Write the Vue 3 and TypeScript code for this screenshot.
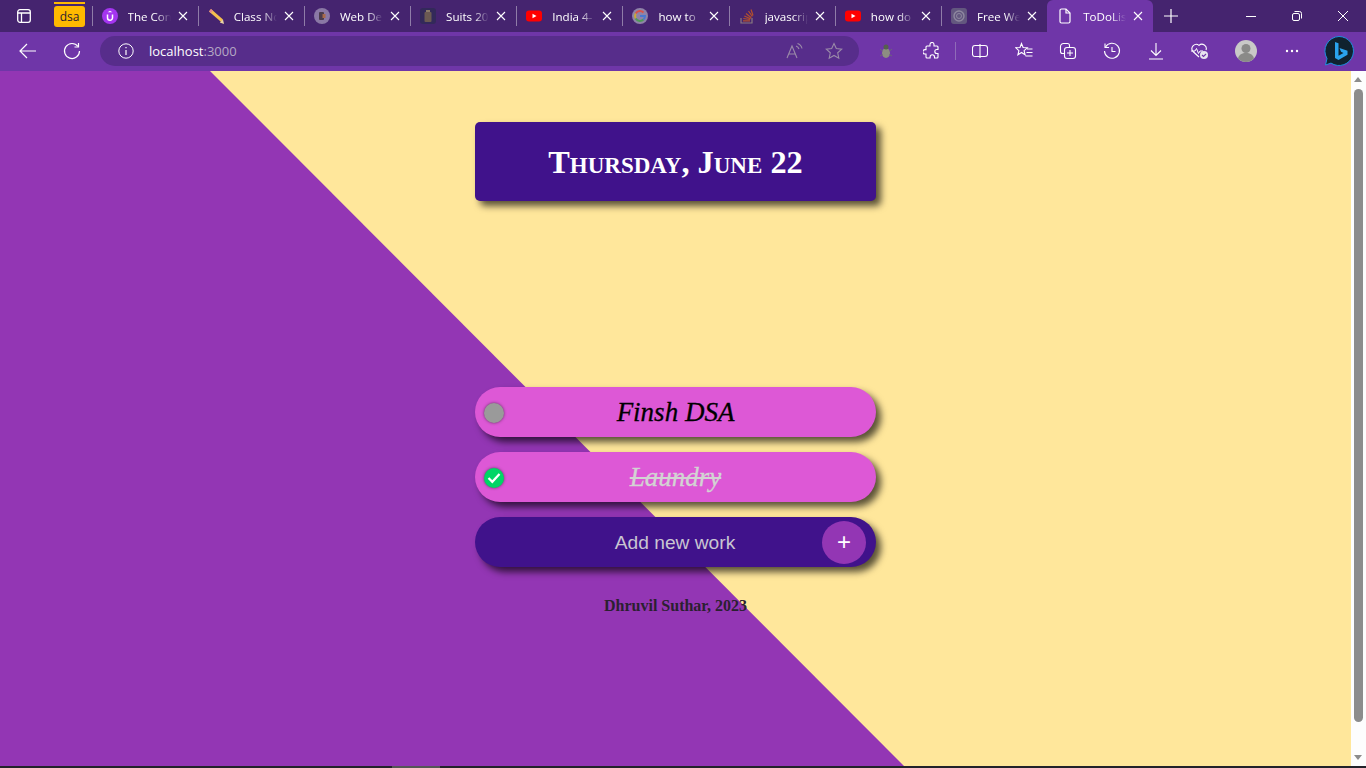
<script setup lang="ts">
interface Tab {
  title: string
  icon: string
}

const tabs: Tab[] = [
  { title: 'The Con', icon: 'udemy' },
  { title: 'Class No', icon: 'pencil' },
  { title: 'Web De', icon: 'web' },
  { title: 'Suits 20', icon: 'suits' },
  { title: 'India 4-', icon: 'youtube' },
  { title: 'how to', icon: 'google' },
  { title: 'javascrip', icon: 'stack' },
  { title: 'how do', icon: 'youtube' },
  { title: 'Free We', icon: 'gpt' },
]

const tasks = [
  { label: 'Finsh DSA', done: false },
  { label: 'Laundry', done: true },
]
</script>

<template>
  <div class="window">
    <header class="tabstrip">
      <div class="tab-menu">
        <svg width="16" height="16" viewBox="0 0 16 16" fill="none" stroke="#fff" stroke-width="1.3">
          <rect x="1.7" y="1.7" width="12.6" height="12.6" rx="2.2" />
          <path d="M1.7 5h12.6M5.5 5v9.3" />
        </svg>
      </div>
      <div class="group-chip">dsa</div>
      <div class="tabs">
        <div v-for="tab in tabs" :key="tab.title" class="tab">
          <span class="favicon">
            <svg v-if="tab.icon === 'udemy'" width="16" height="16" viewBox="0 0 16 16">
              <circle cx="8" cy="8" r="8" fill="#a435f0" />
              <path d="M5.5 6.5v3.2a2.5 2.5 0 0 0 5 0V6.5" fill="none" stroke="#fff" stroke-width="1.5" />
              <path d="M8 2.8l2.4 1.4H5.6z" fill="#fff" />
            </svg>
            <svg v-else-if="tab.icon === 'pencil'" width="16" height="16" viewBox="0 0 16 16">
              <path d="M3 1l12 10.500-1.800 2.500L1 3.500z" fill="#f4c04e" />
              <path d="M3 1L1 3.500l1.800 1.500 2.200-2.300z" fill="#e58a8a" />
              <path d="M15 11.500L16 16l-4.200-1.500z" fill="#e9d3a6" />
            </svg>
            <svg v-else-if="tab.icon === 'web'" width="16" height="16" viewBox="0 0 16 16">
              <circle cx="8" cy="8" r="8" fill="#8a78a5" />
              <rect x="5" y="4" width="5" height="8" rx="1" fill="#4b3c4c" />
              <rect x="8.500" y="6" width="3" height="4" fill="#a86a4a" />
            </svg>
            <svg v-else-if="tab.icon === 'suits'" width="16" height="16" viewBox="0 0 16 16">
              <rect width="16" height="16" rx="3" fill="#33295a" />
              <rect x="4.500" y="4" width="7" height="10" rx="1" fill="#6b5a52" />
              <rect x="6" y="2" width="4" height="2" fill="#8a7a6a" />
            </svg>
            <svg v-else-if="tab.icon === 'youtube'" width="16" height="16" viewBox="0 0 16 16">
              <rect y="2.500" width="16" height="11" rx="3" fill="#f00" />
              <path d="M6.500 5.700l4 2.300-4 2.300z" fill="#fff" />
            </svg>
            <svg v-else-if="tab.icon === 'google'" width="16" height="16" viewBox="0 0 16 16" fill="none" stroke-width="2">
              <circle cx="8" cy="8" r="8" fill="#8f83a8" />
              <path d="M11.500 4.500A5 5 0 0 0 3.700 5.500" stroke="#d9534a" />
              <path d="M3.700 5.500a5 5 0 0 0 0 5" stroke="#c9a83a" />
              <path d="M3.700 10.500A5 5 0 0 0 11.500 11.500" stroke="#4f9a58" />
              <path d="M8 8h5a5 5 0 0 1-1.500 3.500" stroke="#4a78d0" />
            </svg>
            <svg v-else-if="tab.icon === 'stack'" width="16" height="16" viewBox="0 0 16 16" fill="none">
              <path d="M2 10v5h11v-5" stroke="#8a7a80" stroke-width="1.200" />
              <path d="M4 12.800h7M4.300 10.500l6.800 1M5.300 8l6.300 2.800M7 5.500l5.300 4.200M9.500 3l3.800 5.500M12 1.500l2 6" stroke="#b5502c" stroke-width="1.200" />
            </svg>
            <svg v-else width="16" height="16" viewBox="0 0 16 16" fill="none">
              <rect width="16" height="16" rx="3" fill="#63577f" />
              <circle cx="8" cy="8" r="5" stroke="#8f88a0" stroke-width="1.400" />
              <circle cx="8" cy="8" r="2.500" stroke="#8f88a0" />
            </svg>
          </span>
          <span class="tab-title">{{ tab.title }}</span>
          <svg class="tab-close" width="10" height="10" viewBox="0 0 10 10" stroke="#fff" stroke-width="1.100">
            <path d="M1 1l8 8M9 1l-8 8" />
          </svg>
        </div>
        <div class="tab tab--active">
          <span class="favicon">
            <svg width="16" height="16" viewBox="0 0 16 16" fill="none" stroke="#fff" stroke-width="1.200">
              <path d="M3 2.500a1.500 1.500 0 0 1 1.500-1.500H9l4 4v8.500a1.500 1.500 0 0 1-1.500 1.500h-7A1.500 1.500 0 0 1 3 13.500z" />
              <path d="M9 1v4h4" />
            </svg>
          </span>
          <span class="tab-title">ToDoLis</span>
          <svg class="tab-close" width="10" height="10" viewBox="0 0 10 10" stroke="#fff" stroke-width="1.100">
            <path d="M1 1l8 8M9 1l-8 8" />
          </svg>
        </div>
        <div class="new-tab">
          <svg width="14" height="14" viewBox="0 0 14 14" stroke="#fff" stroke-width="1.200">
            <path d="M7 0v14M0 7h14" />
          </svg>
        </div>
      </div>
      <div class="window-controls">
        <div class="win-btn">
          <svg width="10" height="10" viewBox="0 0 10 10" stroke="#fff"><path d="M0 5.500h10" /></svg>
        </div>
        <div class="win-btn">
          <svg width="10" height="10" viewBox="0 0 10 10" fill="none" stroke="#fff">
            <rect x=".5" y="2.500" width="7" height="7" rx="1.500" />
            <path d="M2.500 .5h5a2 2 0 0 1 2 2v5" />
          </svg>
        </div>
        <div class="win-btn">
          <svg width="10" height="10" viewBox="0 0 10 10" stroke="#fff"><path d="M0 0l10 10M10 0L0 10" /></svg>
        </div>
      </div>
    </header>

    <nav class="toolbar">
      <div class="nav-btn">
        <svg width="18" height="16" viewBox="0 0 18 16" fill="none" stroke="#fff" stroke-width="1.200">
          <path d="M17 8H1M8 1L1 8l7 7" />
        </svg>
      </div>
      <div class="nav-btn">
        <svg width="18" height="18" viewBox="0 0 18 18" fill="none" stroke="#fff" stroke-width="1.200">
          <path d="M15 4.500A7.500 7.500 0 1 0 16.500 9" />
          <path d="M15.500 1v4h-4" />
        </svg>
      </div>
      <div class="address">
        <svg width="16" height="16" viewBox="0 0 16 16" fill="none" stroke="#fff">
          <circle cx="8" cy="8" r="7.200" />
          <path d="M8 7v5M8 4v1.300" stroke-width="1.200" />
        </svg>
        <span class="url">localhost<span class="url-port">:3000</span></span>
        <span class="address-end">
          <svg width="18" height="18" viewBox="0 0 18 18" fill="none" stroke="#9a8aa8" stroke-width="1.100">
            <path d="M1 16L6 4l5 12M2.800 12h6.400M10 4c1.500.5 2.500 1.500 3 3M11.500 1.500c2.500.8 4 2.500 4.500 5" />
          </svg>
          <svg width="18" height="18" viewBox="0 0 18 18" fill="none" stroke="#9a8aa8" stroke-width="1.100">
            <path d="M9 1.500l2.300 5 5.400.6-4 3.700 1.100 5.400L9 13.500l-4.800 2.700 1.100-5.400-4-3.700 5.400-.6z" />
          </svg>
        </span>
      </div>
      <div class="tool-group">
        <div class="tool tool--bug">
          <svg width="14" height="16" viewBox="0 0 14 16">
            <ellipse cx="7" cy="10" rx="4" ry="5" fill="#8d8d82" />
            <circle cx="7" cy="4" r="2.500" fill="#55604c" />
            <path d="M1 6l2.500 2M13 6l-2.500 2M1 13l2.500-1.500M13 13l-2.500-1.500" stroke="#6d6579" />
          </svg>
        </div>
        <div class="tool">
          <svg width="18" height="18" viewBox="0 0 18 18" fill="none" stroke="#fff" stroke-width="1.100">
            <path d="M7 2.500a2 2 0 0 1 4 0V4h3a1 1 0 0 1 1 1v2.500h-1.200a2 2 0 0 0 0 4H15V15a1 1 0 0 1-1 1h-2.500v-1a2.200 2.200 0 0 0-4.400 0v1H4a1 1 0 0 1-1-1v-3H2a2.200 2.200 0 0 1 0-4.400h1V5a1 1 0 0 1 1-1h3z" />
          </svg>
        </div>
        <span class="tool-sep" />
        <div class="tool">
          <svg width="16" height="14" viewBox="0 0 16 14" fill="none" stroke="#fff" stroke-width="1.100">
            <rect x=".5" y="1.500" width="15" height="11" rx="2.500" />
            <path d="M8 0v14" />
          </svg>
        </div>
        <div class="tool">
          <svg width="18" height="18" viewBox="0 0 18 18" fill="none" stroke="#fff" stroke-width="1.100">
            <path d="M6.500 1.500l1.600 4 4.200.3-3.200 2.800 1 4.200-3.600-2.300L2.900 12.800l1-4.200L.8 5.800 5 5.500zM12 7h5.500M11.500 10.500h6M10.500 14h7" />
          </svg>
        </div>
        <div class="tool">
          <svg width="18" height="18" viewBox="0 0 18 18" fill="none" stroke="#fff" stroke-width="1.100">
            <path d="M5 11.500H3.500A2 2 0 0 1 1.500 9.500V4.500a3 3 0 0 1 3-3h4a2 2 0 0 1 2 2V5" />
            <rect x="5.500" y="5.500" width="11" height="11" rx="2.500" />
            <path d="M11 8v6M8 11h6" />
          </svg>
        </div>
        <div class="tool">
          <svg width="18" height="18" viewBox="0 0 18 18" fill="none" stroke="#fff" stroke-width="1.100">
            <path d="M2.500 5A7.500 7.500 0 1 1 1.500 9" />
            <path d="M2 1.500V5.500h4M9 5v4.500h3.500" />
          </svg>
        </div>
        <div class="tool">
          <svg width="14" height="18" viewBox="0 0 14 18" fill="none" stroke="#fff" stroke-width="1.100">
            <path d="M7 1v12M2 8.500L7 13.500l5-5M0 17h14" />
          </svg>
        </div>
        <div class="tool">
          <svg width="20" height="18" viewBox="0 0 20 18" fill="none">
            <path d="M9 15L3 9.500a4.300 4.300 0 0 1 6-6.100 4.300 4.300 0 0 1 7 4.600" stroke="#fff" stroke-width="1.100" />
            <path d="M1 9h4l1.500-2.500 2 5L10 9h3" stroke="#fff" />
            <circle cx="14" cy="13" r="4" fill="#e8e4ee" />
            <path d="M12 13l1.500 1.500L16 12" stroke="#6f36a8" stroke-width="1.100" />
          </svg>
        </div>
        <div class="tool tool--avatar">
          <svg width="22" height="22" viewBox="0 0 22 22">
            <circle cx="11" cy="11" r="11" fill="#c9c9c7" />
            <circle cx="11" cy="8.500" r="4.500" fill="#8a8a88" />
            <path d="M3 18.500c1-4 4-5.500 8-5.500s7 1.500 8 5.500a11 11 0 0 1-16 0z" fill="#8a8a88" />
          </svg>
        </div>
        <div class="tool tool--dots">
          <svg width="14" height="4" viewBox="0 0 14 4" fill="#fff">
            <circle cx="2" cy="2" r="1.200" />
            <circle cx="7" cy="2" r="1.200" />
            <circle cx="12" cy="2" r="1.200" />
          </svg>
        </div>
        <div class="tool tool--bing">
          <svg width="30" height="30" viewBox="0 0 30 30">
            <path d="M15 .5a14.500 14.500 0 1 1-8 26.600L1.500 29 3 22.500A14.500 14.500 0 0 1 15 .5z" fill="#10222f" stroke="#1e8fe0" />
            <path d="M11 6l3.500 1.300v12.500l5-2.800-2.500-1.200-1.500-3.800 8 2.800v4L14.500 24 11 22z" fill="#2aa3ee" />
          </svg>
        </div>
      </div>
    </nav>

    <div class="viewport">
      <main class="page">
        <div class="heading">
          <h1>Thursday, June 22</h1>
        </div>
        <div v-for="task in tasks" :key="task.label" class="item">
          <span class="check" :class="{ 'check--done': task.done }">
            <svg v-if="task.done" width="14" height="12" viewBox="0 0 14 12" fill="none" stroke="#fff" stroke-width="2.200">
              <path d="M1.500 6l3.800 3.800L12.500 2" />
            </svg>
          </span>
          <p :class="{ 'item-done': task.done }">{{ task.label }}</p>
        </div>
        <form class="item item--add" @submit.prevent>
          <input type="text" placeholder="Add new work" />
          <button type="submit">+</button>
        </form>
        <footer class="credit">Dhruvil Suthar, 2023</footer>
      </main>
      <aside class="scrollbar">
        <span class="arrow arrow--up" />
        <span class="thumb" />
        <span class="arrow arrow--down" />
      </aside>
    </div>
    <div class="taskbar"><span class="taskbar-item" /></div>
  </div>
</template>

<style>
html,
body {
  margin: 0;
  overflow: hidden;
}
</style>

<style scoped>
.window {
  width: 1366px;
  height: 768px;
  display: flex;
  flex-direction: column;
  overflow: hidden;
  font-family: "Open Sans", sans-serif;
  background: #ffe79b;
}

.tabstrip {
  height: 32px;
  display: flex;
  background: #45246f;
  color: #fff;
}

.tab-menu {
  width: 48px;
  display: flex;
  align-items: center;
  justify-content: center;
}

.group-chip {
  position: relative;
  width: 31px;
  height: 21px;
  margin: 6px 6.500px 0 6px;
  border-radius: 3px;
  background: #ffb900;
  color: #2b2030;
  font-size: 12px;
  line-height: 21px;
  text-align: center;
}

.group-chip::before {
  content: "";
  position: absolute;
  left: 0;
  right: 0;
  top: -4px;
  height: 2px;
  background: #ffb900;
}

.tabs {
  flex: 1;
  display: flex;
}

.tab {
  position: relative;
  width: 106.200px;
  flex: none;
  display: flex;
  align-items: center;
  box-sizing: border-box;
  padding: 0 10px;
  font-size: 11.600px;
}

.tab::before {
  content: "";
  position: absolute;
  left: 0;
  top: 6px;
  height: 20px;
  width: 1px;
  background: #8f7ca8;
}

.tab--active {
  background: #6f36a8;
  border-radius: 6px 6px 0 0;
}

.tab--active::before {
  display: none;
}

.favicon {
  width: 16px;
  height: 16px;
  flex: none;
  display: block;
}

.favicon svg {
  display: block;
}

.tab-title {
  width: 47px;
  margin-left: 10px;
  white-space: nowrap;
  overflow: hidden;
  -webkit-mask-image: linear-gradient(to right, #000 65%, transparent);
  mask-image: linear-gradient(to right, #000 65%, transparent);
}

.tab-close {
  flex: none;
  margin-left: 7px;
}

.new-tab {
  width: 36px;
  display: flex;
  align-items: center;
  justify-content: center;
}

.window-controls {
  display: flex;
}

.win-btn {
  width: 46px;
  display: flex;
  align-items: center;
  justify-content: center;
}

.toolbar {
  height: 39px;
  display: flex;
  align-items: center;
  background: #6f36a8;
  box-sizing: border-box;
  padding: 0 5px 1px 6px;
}

.nav-btn {
  width: 44px;
  display: flex;
  justify-content: center;
}

.address {
  width: 759px;
  height: 30px;
  margin-left: 6px;
  display: flex;
  align-items: center;
  box-sizing: border-box;
  padding: 0 16px 0 18px;
  border-radius: 15px;
  background: #572d8b;
  color: #fff;
  font-size: 13px;
}

.url {
  margin-left: 15px;
}

.url-port {
  color: #b5a8c4;
}

.address-end {
  margin-left: auto;
  display: flex;
  gap: 21px;
}

.tool-group {
  display: flex;
  align-items: center;
  margin-left: 5px;
}

.tool {
  width: 44px;
  display: flex;
  justify-content: center;
  align-items: center;
}

.tool--bug {
  margin-right: 2px;
}

.tool-sep {
  width: 1px;
  height: 18px;
  margin: 0 2px 0 1px;
  background: #8f6bb8;
}

.tool--avatar {
  margin-left: 2px;
}

.tool--dots {
  margin-left: 2px;
}

.tool--bing {
  margin-left: 3px;
}

.viewport {
  flex: 1;
  min-height: 0;
  display: flex;
}

.page {
  position: relative;
  flex: 1;
  display: flex;
  flex-direction: column;
  align-items: center;
  padding-top: 51px;
  background: #ffe79b;
}

.page::before {
  content: "";
  position: absolute;
  inset: 0;
  background: #9336b4;
  clip-path: polygon(0 0, 210px 0, 904px 100%, 0 100%);
}

.heading,
.item,
.credit {
  position: relative;
}

.heading {
  width: 401px;
  height: 79px;
  margin-bottom: 186px;
  display: flex;
  align-items: center;
  justify-content: center;
  border-radius: 5px;
  background: #40128b;
  box-shadow: 5px 5px 7px rgba(0, 0, 0, 0.65);
}

.heading h1 {
  margin: 1px 0 0;
  color: #fff;
  font-family: "Liberation Serif", serif;
  font-size: 32.300px;
  font-weight: 700;
  font-variant: small-caps;
}

.item {
  width: 401px;
  height: 50px;
  margin-bottom: 15px;
  display: flex;
  align-items: center;
  justify-content: center;
  border-radius: 25px;
  background: #dd58d6;
  box-shadow: 5px 5px 7px rgba(0, 0, 0, 0.65);
}

.item p {
  margin: 0;
  color: #000;
  font-family: "Liberation Serif", serif;
  font-size: 27px;
  font-style: italic;
  -webkit-text-stroke: 0.3px currentColor;
}

.item p.item-done {
  color: #d3d3d3;
  text-decoration: line-through;
}

.check {
  position: absolute;
  left: 9px;
  top: 16px;
  width: 20px;
  height: 20px;
  display: flex;
  align-items: center;
  justify-content: center;
  border-radius: 50%;
  background: #9a9a9a;
  box-shadow: 0 0 3px rgba(60, 40, 60, 0.8);
}

.check--done {
  background: #00d566;
}

.item--add {
  background: #40128b;
}

.item--add input {
  width: 100%;
  box-sizing: border-box;
  padding: 2px 1px 0 0;
  border: 0;
  outline: 0;
  background: transparent;
  text-align: center;
  font-family: "Liberation Sans", sans-serif;
  font-size: 19.200px;
  color: #c9c5d2;
}

.item--add input::placeholder {
  color: #c9c5d2;
  opacity: 1;
}

.item--add button {
  position: absolute;
  right: 10px;
  top: 4px;
  width: 44px;
  height: 43px;
  padding: 0 0 1px;
  border: 0;
  border-radius: 50%;
  background: #9336b4;
  color: #fff;
  font-family: "Liberation Sans", sans-serif;
  font-size: 24px;
}

.credit {
  margin-top: 15px;
  color: #2b2030;
  font-family: "Liberation Serif", serif;
  font-size: 16px;
  font-weight: 700;
}

.scrollbar {
  width: 15px;
  position: relative;
  background: #fdfdfd;
}

.thumb {
  position: absolute;
  left: 3px;
  top: 18px;
  bottom: 44px;
  width: 9px;
  border-radius: 5px;
  background: #8c8c8c;
}

.arrow {
  position: absolute;
  left: 3px;
  width: 0;
  height: 0;
  border-left: 4px solid transparent;
  border-right: 4px solid transparent;
}

.arrow--up {
  top: 6px;
  border-bottom: 5px solid #8c8c8c;
}

.arrow--down {
  bottom: 6px;
  border-top: 5px solid #8c8c8c;
}

.taskbar {
  height: 2px;
  background: #22222a;
  padding-left: 392px;
}

.taskbar-item {
  display: block;
  width: 48px;
  height: 2px;
  background: #555;
}
</style>
